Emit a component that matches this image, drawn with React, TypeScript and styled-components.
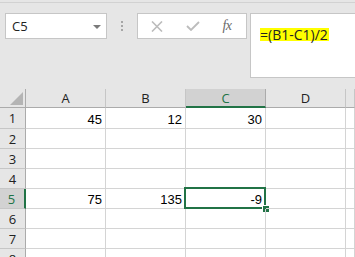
import React from "react";
import styled, { createGlobalStyle } from "styled-components";

const Global = createGlobalStyle`
  html, body { margin: 0; padding: 0; background: #ffffff; }
  body { font-family: "Open Sans", "Noto Sans", sans-serif; }
`;

const Page = styled.div`
  width: 355px;
  height: 257px;
  overflow: hidden;
  background: #ffffff;
  display: flex;
  flex-direction: column;
`;

const Toolbar = styled.div`
  height: 89px;
  flex: none;
  background: #e6e6e6;
  display: flex;
  flex-direction: column;
`;

const TopRule = styled.div`
  height: 1px;
  margin-top: 2px;
  background: #d2d2d2;
`;

const BarRow = styled.div`
  display: flex;
  align-items: flex-start;
  padding: 10px 0 0 5px;
`;

const NameBox = styled.div`
  box-sizing: border-box;
  width: 102px;
  height: 26px;
  background: #fff;
  border: 1px solid #c6c6c6;
  display: flex;
  align-items: center;
  justify-content: space-between;
  padding: 0 5px 0 6px;
  font-size: 13px;
  color: #222;
`;

const Caret = styled.span`
  width: 0;
  height: 0;
  border-left: 4px solid transparent;
  border-right: 4px solid transparent;
  border-top: 4px solid #7a7a7a;
  margin-top: 1px;
`;

const Grip = styled.div`
  width: 30px;
  height: 26px;
  display: flex;
  flex-direction: column;
  align-items: center;
  justify-content: center;
  gap: 2px;
`;

const GripDot = styled.span`
  width: 2px;
  height: 2px;
  background: #a6a6a6;
`;

const FxButtons = styled.div`
  box-sizing: border-box;
  width: 110px;
  height: 26px;
  background: #fff;
  border: 1px solid #c6c6c6;
  display: flex;
  align-items: center;
  padding-left: 12px;
`;

const FxButton = styled.span<{ $w: number }>`
  width: ${(p) => p.$w}px;
  display: flex;
  align-items: center;
  justify-content: center;
  flex: none;
`;

const FxLabel = styled.span`
  font-family: "Liberation Serif", "DejaVu Serif", serif;
  font-style: italic;
  font-size: 14px;
  color: #6a6a6a;
  letter-spacing: -0.5px;
`;

const FormulaBox = styled.div`
  box-sizing: border-box;
  flex: 1;
  margin-left: 3px;
  margin-right: -4px;
  height: 65px;
  background: #fff;
  border: 1px solid #c6c6c6;
  padding: 9px 0 0 9px;
`;

const Highlight = styled.span`
  background: #ffff00;
  font-family: "Open Sans", "Noto Sans", sans-serif;
  font-size: 14px;
  line-height: 13px;
  color: #222;
  display: inline-block;
  padding: 0 1px 0 0;
`;

const Sheet = styled.div`
  display: grid;
  grid-template-columns: 26px 80px 80px 80px 80px 1fr;
  grid-template-rows: 19px 21px repeat(7, 20px);
  background: #fff;
`;

const Corner = styled.div`
  box-sizing: border-box;
  background: #e6e6e6;
  border-right: 1px solid #ababab;
  border-bottom: 1px solid #ababab;
  position: relative;
`;

const CornerTri = styled.span`
  position: absolute;
  right: 2px;
  bottom: 2px;
  width: 0;
  height: 0;
  border-left: 13px solid transparent;
  border-bottom: 13px solid #b4b4b4;
`;

const ColHead = styled.div<{ $sel?: boolean }>`
  box-sizing: border-box;
  background: ${(p) => (p.$sel ? "#d2d2d2" : "#e6e6e6")};
  border-right: 1px solid ${(p) => (p.$sel ? "#ababab" : "#c6c6c6")};
  border-bottom: ${(p) => (p.$sel ? "2px solid #217346" : "1px solid #ababab")};
  display: flex;
  align-items: center;
  justify-content: center;
  font-size: 13px;
  color: ${(p) => (p.$sel ? "#217346" : "#222")};
`;

const RowHead = styled.div<{ $sel?: boolean }>`
  box-sizing: border-box;
  background: ${(p) => (p.$sel ? "#d2d2d2" : "#e6e6e6")};
  border-right: ${(p) => (p.$sel ? "2px solid #217346" : "1px solid #ababab")};
  border-bottom: 1px solid #c6c6c6;
  display: flex;
  align-items: center;
  justify-content: center;
  padding-right: ${(p) => (p.$sel ? "1px" : "0")};
  font-size: 13px;
  color: ${(p) => (p.$sel ? "#217346" : "#222")};
`;

const Cell = styled.div`
  box-sizing: border-box;
  border-right: 1px solid #d4d4d4;
  border-bottom: 1px solid #d4d4d4;
  display: flex;
  align-items: center;
  justify-content: flex-end;
  padding: 2px 3px 0 0;
  font-family: "Liberation Sans", Arial, sans-serif;
  font-size: 13px;
  color: #000;
  position: relative;
`;

const Selection = styled.span`
  position: absolute;
  left: -2px;
  top: -2px;
  right: -1px;
  bottom: -1px;
  border: 2px solid #217346;
  pointer-events: none;
`;

const FillHandle = styled.span`
  position: absolute;
  right: -4px;
  bottom: -4px;
  width: 6px;
  height: 6px;
  background: #217346;
  border-left: 1px solid #fff;
  border-top: 1px solid #fff;
`;

const cols = ["A", "B", "C", "D", ""];
const data: Record<number, string[]> = {
  1: ["45", "12", "30", "", ""],
  5: ["75", "135", "-9", "", ""],
};

export default function App() {
  const rows = [1, 2, 3, 4, 5, 6, 7, 8];
  return (
    <Page>
      <Global />
      <Toolbar>
        <TopRule />
        <BarRow>
          <NameBox>
            <span>C5</span>
            <Caret />
          </NameBox>
          <Grip>
            <GripDot />
            <GripDot />
            <GripDot />
          </Grip>
          <FxButtons>
            <FxButton $w={14}>
              <svg width="12" height="11" viewBox="0 0 12 11">
                <path d="M1 0.5 L11 10.5 M11 0.5 L1 10.5" stroke="#bcbcbc" strokeWidth="1.6" fill="none" />
              </svg>
            </FxButton>
            <FxButton $w={22} />
            <FxButton $w={14}>
              <svg width="14" height="10" viewBox="0 0 14 10">
                <path d="M1 5 L5 9 L13 1" stroke="#bcbcbc" strokeWidth="1.8" fill="none" />
              </svg>
            </FxButton>
            <FxButton $w={20} />
            <FxButton $w={14}>
              <FxLabel>fx</FxLabel>
            </FxButton>
          </FxButtons>
          <FormulaBox>
            <Highlight>=(B1-C1)/2</Highlight>
          </FormulaBox>
        </BarRow>
      </Toolbar>
      <Sheet>
        <Corner>
          <CornerTri />
        </Corner>
        {cols.map((c, i) => (
          <ColHead key={i} $sel={c === "C"}>
            {c}
          </ColHead>
        ))}
        {rows.map((r) => (
          <React.Fragment key={r}>
            <RowHead $sel={r === 5}>{r}</RowHead>
            {cols.map((c, i) => (
              <Cell key={i}>
                {data[r]?.[i] ?? ""}
                {r === 5 && c === "C" && (
                  <>
                    <Selection />
                    <FillHandle />
                  </>
                )}
              </Cell>
            ))}
          </React.Fragment>
        ))}
      </Sheet>
    </Page>
  );
}
